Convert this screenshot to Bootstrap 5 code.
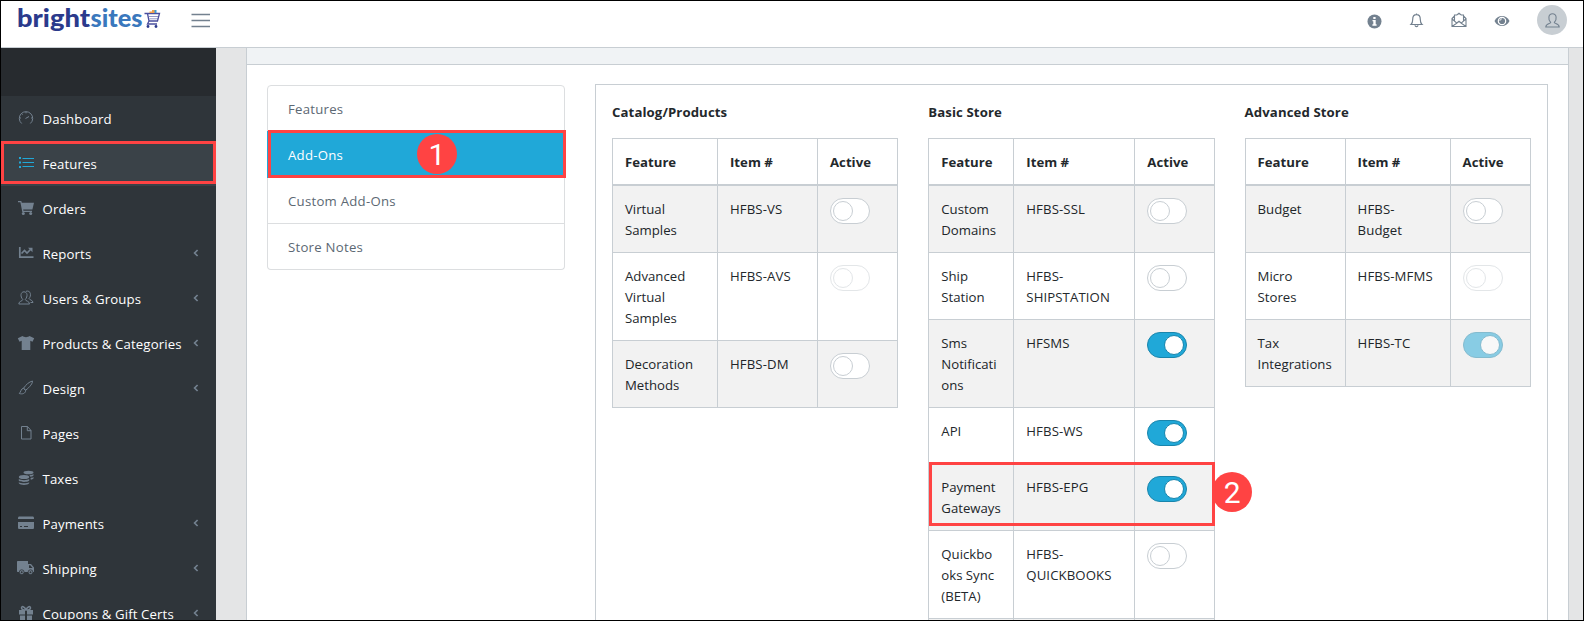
<!DOCTYPE html>
<html lang="en">
<head>
<meta charset="utf-8">
<meta name="viewport" content="width=device-width, initial-scale=1">
<title>Brightsites Admin</title>
<link href="https://cdn.jsdelivr.net/npm/bootstrap@5.3.0/dist/css/bootstrap.min.css" rel="stylesheet">
<style>
body{font-family:"Open Sans","Noto Sans",sans-serif;font-size:13.2px;line-height:21px;color:#23282c;background:#e4e5e6;height:621px;overflow:hidden}
.shell{height:621px;border:1px solid #000;overflow:hidden}
.topbar{height:47px;flex:none;border-bottom:1px solid #c8ced3;padding:0 16px 0 15px}
.topbar svg,.side-nav svg{color:#73818f;flex:none}
.tools{gap:27px}
.avatar{width:30px;height:30px;background:#c8ced3}
.side-nav{width:215px;flex:none;background:#2f353a}
.side-top{height:48px;background:#272b2f;flex:none}
.side-nav .nav-link{height:45px;flex:none;padding:0 17px 1px 17px;color:#fff;display:flex;align-items:center;white-space:nowrap;position:relative;letter-spacing:.13px}
.side-nav .nav-link>span{margin-left:8.5px;padding-top:2px}
.side-nav .nav-link .chev{margin-left:auto}
.side-nav .nav-link.active{background:#3a4248}
.side-nav .nav-link.active svg{color:#20a8d8}
.main-area{padding:0 14px 0 30px}
.feature-card{border:1px solid #c8ced3;border-width:0 1px;height:572px;width:1323px}
.feature-head{height:17px;background:#f0f3f5;border-bottom:1px solid #c8ced3}
.feature-body{padding:19px 20px 0 20px;gap:30px}
.tabs-list{width:298px;flex:none;margin-top:1px;--bs-list-group-border-color:#dcdee0;--bs-list-group-border-radius:4px}
.tabs-list .list-group-item{height:47px;padding:13px 20px 10px;color:#5c6873;letter-spacing:.25px}
.tabs-list .list-group-item+.list-group-item{height:46px}
.tabs-list .list-group-item.active{background:#20a8d8;border-color:#20a8d8;color:#fff;height:47px}
.panel{width:953px;height:560px;border:1px solid #c8ced3;padding:17px 16px;gap:30.3px}
.panel h6{font-size:13.2px;line-height:21px;font-weight:700;margin-bottom:15px;letter-spacing:.1px}
.store{width:286px;flex:none}
.store .table{table-layout:fixed;width:286px;margin:0;--bs-table-color:#23282c;--bs-table-bg:#fff;border-color:#c8ced3;--bs-table-striped-bg:#f2f2f2;border-collapse:collapse}
.store .table>:not(caption)>*>*{padding:13px 12px 11px;border:1px solid #c8ced3;vertical-align:top;overflow-wrap:anywhere;line-height:21px}
.store .table>thead>tr>th{border-bottom-width:2px;font-weight:700;height:46px;padding-bottom:10px}
.store .table>tbody>tr>td:last-child{padding:12px 12px 0}
.store .table>tbody>tr>td:nth-child(2){letter-spacing:.1px;padding-right:8px}
.store td{height:67px}
.store .r3 td{height:88px}.store .r1 td{height:56px}
.sw{display:block;width:40px;height:26px;border:1px solid #c8ced3;border-radius:13px;background:#fff;padding:2px}
.sw::before{content:"";display:block;width:20px;height:20px;border:1px solid #c8ced3;border-radius:50%;background:#fff}
.sw.on{background:#20a8d8;border-color:#1985ac}
.sw.on::before{margin-left:14px;border-color:#1985ac}
.sw.off{opacity:.5}
.mark-box{position:absolute;border:3px solid #ff4343;z-index:3;pointer-events:none}
.step{position:absolute;width:40px;height:40px;border-radius:50%;background:#ff4343;color:#fff;font:30px/41px Roboto,sans-serif;letter-spacing:0;text-align:center;z-index:4}
</style>
<script src="https://cdn.jsdelivr.net/npm/bootstrap@5.3.0/dist/js/bootstrap.bundle.min.js"></script>
</head>
<body>
<svg class="d-none">
<symbol id="chev" viewBox="0 0 6 8"><path d="M4.600 1 1.600 4l3 3" fill="none" stroke="currentColor" stroke-width="1.700"/></symbol>
</svg>
<div class="shell d-flex flex-column position-relative">
<header class="topbar bg-white d-flex align-items-start">
  <svg width="146" height="40" viewBox="0 0 146 40" role="img">
    <text x="1" y="26" font-family="Lato" font-weight="900" font-size="25" textLength="73" lengthAdjust="spacingAndGlyphs" fill="#2b3a8c">bright</text>
    <text x="74.500" y="26" font-family="Lato" font-weight="900" font-size="25" textLength="52" lengthAdjust="spacingAndGlyphs" fill="#3a78bd">sites</text>
    <g fill="none" stroke="#4a4f9e" stroke-width="1.300"><path d="M128.500 12.500h3l1.500 7.500h8.500l2-7.500h-11.500M133 20l-1.500 3h9.500"/><path d="M133 15.500h9.500M133.500 17.800h8.500" stroke-width=".6"/></g>
    <circle cx="132" cy="25.500" r="1.400" fill="#2b3a8c"/><circle cx="140" cy="25.500" r="1.400" fill="#2b3a8c"/>
    <path d="M133.500 12v-1.500h2.500v-1.500h3v3z" fill="#f2a04a"/><path d="M138.500 12v-3h2v3z" fill="#3a9bd6"/>
  </svg>
  <svg class="ms-4" width="30" height="30" viewBox="0 0 30 30" style="margin-top:5px"><path d="M5.500 8.500H24M5.500 14.500H24M5.500 20.500H24" stroke="currentColor" stroke-width="1.300"/></svg>
  <div class="tools d-flex align-items-center ms-auto" style="height:38px">
    <svg width="15" height="15" viewBox="0 0 15 15" style="margin-top:2px"><circle cx="7.500" cy="7.500" r="7" fill="currentColor"/><path d="M6.300 3h2.300v2H6.300zM5.500 6h3.200v4.300h.9v1.400H5.400v-1.400h.9V7.300h-.8z" fill="#fff"/></svg>
    <svg width="15" height="15" viewBox="0 0 15 15" fill="none" stroke="currentColor" stroke-width="1.200"><path d="M7.500.5v1M2 11.500c1.300-1.200 1.700-2.500 1.700-5C3.700 3.500 5 1.700 7.500 1.700s3.800 1.800 3.800 4.800c0 2.500.4 3.800 1.700 5zM6 12.200c.2 1.800 2.800 1.800 3 0"/></svg>
    <svg width="16" height="16" viewBox="0 0 16 16" fill="none" stroke="currentColor" stroke-width="1.100"><path d="M3.500 4 1 6.500v8h14v-8L12.500 4M3.500 8.500V3h2.300L8 1.200 10.200 3h2.300v5.500M1.200 7l4.600 4.200L1.300 14.300M14.800 7l-4.600 4.200 4.500 3.100M5.800 11 8 9.300 10.200 11"/></svg>
    <svg width="16" height="12" viewBox="0 0 16 12" style="margin-top:2px"><path d="M.5 6C3.500-.8 12.500-.8 15.500 6c-3 6.800-12 6.800-15 0z" fill="currentColor"/><circle cx="8" cy="6" r="3.700" fill="none" stroke="#fff" stroke-width="1.200"/><path d="M8 3.800A2.200 2.200 0 0 0 5.800 6" fill="none" stroke="#fff" stroke-width=".8"/></svg>
    <div class="avatar rounded-circle d-flex align-items-center justify-content-center"><svg width="15" height="15" viewBox="0 0 15 15" fill="none" stroke="currentColor" stroke-width="1.100"><path d="M5.700 9.500C2.800 6.500 3.200.8 7.500.8s4.700 5.700 1.800 8.700c0 1.300 4.900.8 4.900 4.500H.8c0-3.700 4.900-3.200 4.900-4.500z"/></svg></div>
  </div>
</header>
<div class="d-flex flex-grow-1">
<nav class="side-nav nav flex-column flex-nowrap" style="height:572px;overflow:hidden">
  <div class="side-top"></div>
  <a class="nav-link"><svg width="16" height="16" viewBox="0 0 16 16" fill="none" stroke="currentColor"><path d="M3.700 13.500A6.700 6.700 0 1 1 12.300 13.500M7.500 8.500l3.500-2M8 2v1.300M2 8h1M13 8h1M3.800 3.800l.8.800"/></svg><span>Dashboard</span></a>
  <a class="nav-link active"><svg width="16" height="16" viewBox="0 0 16 16"><path d="M1 3h2M1 7.500h2M1 12h2" stroke="currentColor" stroke-width="1.900"/><path d="M4.500 3.500H16M4.500 7.500H16M4.500 11.500H16" stroke="currentColor"/></svg><span>Features</span><i class="mark-box" style="inset:0 0 2px 0"></i></a>
  <a class="nav-link"><svg width="16" height="16" viewBox="0 0 16 16" fill="currentColor"><path d="M0 1h3.300l.5 1.700H16l-1.600 6.800H5.200l.3 1.300H14V12H4.300L2.400 2.300H0z"/><circle cx="5.300" cy="13.500" r="1.500"/><circle cx="12.700" cy="13.500" r="1.500"/></svg><span>Orders</span></a>
  <a class="nav-link"><svg width="16" height="16" viewBox="0 0 16 16" fill="none" stroke="currentColor"><path d="M1.800 2v10.200H15.500" stroke-width="1.700"/><path d="m3.500 8.500 3-3 2.500 2.500 3.500-3.500" stroke-width="1.600"/><path d="M10 2.800h4.500v4.500z" fill="currentColor" stroke="none"/></svg><span>Reports</span><svg class="chev" width="6" height="8"><use href="#chev"/></svg></a>
  <a class="nav-link"><svg width="16" height="16" viewBox="0 0 16 16" fill="none" stroke="currentColor"><path d="M4.800 9.500C2 6.500 2.500 1.800 6 1.800s4 4.700 1.300 7.700c0 1.800 4.200 1.200 4.200 4.500H.8c0-3.300 4-2.700 4-4.500zM8 1.300c5-1.500 5.500 4.700 3 7.200.3 1.500 4 1.500 4 4h-2.500"/></svg><span>Users &amp; Groups</span><svg class="chev" width="6" height="8"><use href="#chev"/></svg></a>
  <a class="nav-link"><svg width="18" height="16" viewBox="0 0 18 16" fill="currentColor" style="margin:0 -1px"><path d="M5.500 1c1.500 1.500 5.500 1.500 7 0l4.700 2.200-1.700 3.500-2.200-.9V15H4.700V5.800l-2.200.9L.8 3.200z"/></svg><span>Products &amp; Categories</span><svg class="chev" width="6" height="8"><use href="#chev"/></svg></a>
  <a class="nav-link"><svg width="16" height="16" viewBox="0 0 16 16" fill="none" stroke="currentColor"><path d="M5.500 8.300C8 4.500 11 2 14.500 1c.3 2-2.500 6-6.800 9.200zM5.500 8.300C3 8.300 3 12 1.300 13.500c3 1 6.400 0 6.400-3.300z"/></svg><span>Design</span><svg class="chev" width="6" height="8"><use href="#chev"/></svg></a>
  <a class="nav-link"><svg width="16" height="16" viewBox="0 0 16 16" fill="none" stroke="currentColor"><path d="M3.500 1.500h6l3.500 4v8.500H3.500zM9.300 1.500v4.200H13"/></svg><span>Pages</span></a>
  <a class="nav-link"><svg width="16" height="16" viewBox="0 0 16 16" fill="currentColor"><ellipse cx="10.500" cy="2.500" rx="5" ry="1.800"/><path d="M11.500 5.300c2 0 3.500-.5 4-1.200v1.500c-.6.800-2 1.200-3.500 1.200zM12.500 8c1.300-.1 2.500-.5 3-1v1.500c-.6.600-1.500 1-2.700 1.200z"/><ellipse cx="6" cy="7" rx="5.200" ry="2"/><path d="M.8 9c2 1.500 8.400 1.500 10.400 0v1.700c-2 1.600-8.400 1.600-10.400 0zM.8 12.200c2 1.400 8.400 1.400 10.400 0v1c-1.500 2.300-8.900 2.300-10.400 0z"/></svg><span>Taxes</span></a>
  <a class="nav-link"><svg width="16" height="16" viewBox="0 0 16 16" fill="currentColor"><path d="M0 3.500C0 2 .5 1.500 1.500 1.500h13c1 0 1.500.5 1.500 2v.5H0zM0 7h16v5.500c0 1-.5 1.500-1.500 1.500h-13C.5 14 0 13.500 0 12.500zm2 4v1h2v-1zm4 0v1h4v-1z" fill-rule="evenodd"/></svg><span>Payments</span><svg class="chev" width="6" height="8"><use href="#chev"/></svg></a>
  <a class="nav-link"><svg width="18" height="16" viewBox="0 0 18 16" fill="currentColor" style="margin:0 -1px"><path d="M1 1h10v3h3l3 3.500V12H1C.3 12 0 11.700 0 11V2c0-.7.300-1 1-1zm11 4.200V8h3.600l-2.300-2.800z" fill-rule="evenodd"/><g stroke="#2f353a" stroke-width=".8"><circle cx="4.700" cy="12.200" r="2.400"/><circle cx="13.500" cy="12.200" r="2.400"/></g><circle cx="4.700" cy="12.200" r="1" fill="#2f353a"/><circle cx="13.500" cy="12.200" r="1" fill="#2f353a"/></svg><span>Shipping</span><svg class="chev" width="6" height="8"><use href="#chev"/></svg></a>
  <a class="nav-link"><svg width="16" height="16" viewBox="0 0 16 16" fill="currentColor"><path d="M1 5h6v4.500H1zM9 5h6v4.500H9zM2 10.500h5V15H2zM9 10.500h5V15H9z"/><path d="M8 5C6.500 1 3.500.8 3.500 3c0 1.300 1.500 2 4.500 2zm0 0c1.500-4 4.500-4.200 4.500-2 0 1.300-1.500 2-4.500 2z" fill="none" stroke="currentColor" stroke-width="1.500"/></svg><span>Coupons &amp; Gift Certs</span><svg class="chev" width="6" height="8"><use href="#chev"/></svg></a>
</nav>
<main class="main-area flex-grow-1">
<div class="feature-card bg-white">
  <div class="feature-head"></div>
  <div class="feature-body d-flex align-items-start">
    <div class="tabs-list list-group">
      <a class="list-group-item">Features</a>
      <a class="list-group-item active">Add-Ons<i class="mark-box" style="inset:-2px -2px -1px 0"></i><b class="step" style="left:149px;top:2px">1</b></a>
      <a class="list-group-item">Custom Add-Ons</a>
      <a class="list-group-item">Store Notes</a>
    </div>
    <section class="panel d-flex align-items-start">
      <div class="store"><h6>Catalog/Products</h6>
        <table class="table table-striped"><colgroup><col style="width:105px"><col style="width:100px"><col style="width:80px"></colgroup>
        <thead><tr><th>Feature</th><th>Item #</th><th>Active</th></tr></thead>
        <tbody>
        <tr><td>Virtual Samples</td><td>HFBS-VS</td><td><span class="sw"></span></td></tr>
        <tr class="r3"><td>Advanced Virtual Samples</td><td>HFBS-AVS</td><td><span class="sw off"></span></td></tr>
        <tr><td>Decoration Methods</td><td>HFBS-DM</td><td><span class="sw"></span></td></tr>
        </tbody></table></div>
      <div class="store position-relative"><h6>Basic Store</h6>
        <table class="table table-striped"><colgroup><col style="width:85px"><col style="width:121px"><col style="width:80px"></colgroup>
        <thead><tr><th>Feature</th><th>Item #</th><th>Active</th></tr></thead>
        <tbody>
        <tr><td>Custom Domains</td><td>HFBS-SSL</td><td><span class="sw"></span></td></tr>
        <tr><td>Ship<br>Station</td><td>HFBS-SHIPSTATION</td><td><span class="sw"></span></td></tr>
        <tr class="r3"><td>Sms<br>Notificati<br>ons</td><td>HFSMS</td><td><span class="sw on"></span></td></tr>
        <tr class="r1"><td>API</td><td>HFBS-WS</td><td><span class="sw on"></span></td></tr>
        <tr><td>Payment Gateways</td><td>HFBS-EPG</td><td><span class="sw on"></span></td></tr>
        <tr class="r3"><td>Quickbo<br>oks Sync<br>(BETA)</td><td>HFBS-QUICKBOOKS</td><td><span class="sw"></span></td></tr>
        <tr><td></td><td></td><td></td></tr>
        </tbody></table>
        <i class="mark-box" style="left:1px;top:360px;width:286px;height:64px"></i><b class="step" style="left:284px;top:370px">2</b></div>
      <div class="store"><h6>Advanced Store</h6>
        <table class="table table-striped"><colgroup><col style="width:100px"><col style="width:105px"><col style="width:80px"></colgroup>
        <thead><tr><th>Feature</th><th>Item #</th><th>Active</th></tr></thead>
        <tbody>
        <tr><td>Budget</td><td>HFBS-<br>Budget</td><td><span class="sw"></span></td></tr>
        <tr><td>Micro<br>Stores</td><td>HFBS-MFMS</td><td><span class="sw off"></span></td></tr>
        <tr><td>Tax Integrations</td><td>HFBS-TC</td><td><span class="sw on off"></span></td></tr>
        </tbody></table></div>
    </section>
  </div>
</div>
</main>
</div>
</div>
</body>
</html>
